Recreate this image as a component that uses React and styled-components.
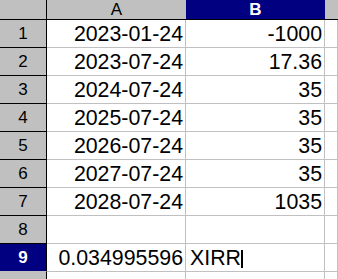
import React from 'react'
import styled, {createGlobalStyle} from 'styled-components'

const GlobalStyle = createGlobalStyle`
    html, body {
        margin: 0;
        padding: 0;
        background: #ffffff;
        overflow: hidden;
    }
`

const Sheet = styled.div`
    display: grid;
    grid-template-columns: 47px 139px 139px 1fr;
    grid-auto-rows: 28px;
    grid-template-rows: 20px;
    width: 338px;
    height: 279px;
    overflow: hidden;
    font-family: "Liberation Sans", Arial, sans-serif;
`

const ColHead = styled.div`
    display: flex;
    align-items: center;
    justify-content: center;
    box-sizing: border-box;
    background: ${({active}) => (active ? '#000080' : '#c0c0c0')};
    color: ${({active}) => (active ? '#ffffff' : '#000000')};
    font-weight: ${({active}) => (active ? 700 : 400)};
    font-size: 17px;
    border-bottom: 1px solid #000000;
    border-right: ${({corner}) => (corner ? '1px solid #000000' : 'none')};
    padding-top: 1px;
`

const RowHead = styled.div`
    display: flex;
    align-items: center;
    justify-content: center;
    box-sizing: border-box;
    background: ${({active}) => (active ? '#000080' : '#c0c0c0')};
    color: ${({active}) => (active ? '#ffffff' : '#000000')};
    font-weight: ${({active}) => (active ? 700 : 400)};
    font-size: 17px;
    border-right: 1px solid #000000;
    border-bottom: 1px solid ${({active}) => (active ? '#c0c0c0' : '#000000')};
`

const Cell = styled.div`
    display: flex;
    align-items: flex-end;
    justify-content: ${({left}) => (left ? 'flex-start' : 'flex-end')};
    box-sizing: border-box;
    border-right: 1px solid #c0c0c0;
    border-bottom: 1px solid #c0c0c0;
    padding: 0 2px 1px 4px;
    font-size: 21.33px;
    line-height: 24px;
    color: #000000;
    white-space: nowrap;
`

const Caret = styled.span`
    display: inline-block;
    width: 2px;
    height: 18px;
    margin-left: 0;
    margin-bottom: 2px;
    background: #000000;
`

const rows = [
    ['2023-01-24', '-1000'],
    ['2023-07-24', '17.36'],
    ['2024-07-24', '35'],
    ['2025-07-24', '35'],
    ['2026-07-24', '35'],
    ['2027-07-24', '35'],
    ['2028-07-24', '1035'],
    ['', ''],
]

export default function App() {
    return (
        <>
            <GlobalStyle />
            <Sheet>
                <ColHead corner />
                <ColHead>A</ColHead>
                <ColHead active>B</ColHead>
                <ColHead />
                {rows.map((row, index) => (
                    <React.Fragment key={index}>
                        <RowHead>{index + 1}</RowHead>
                        <Cell>{row[0]}</Cell>
                        <Cell>{row[1]}</Cell>
                        <Cell />
                    </React.Fragment>
                ))}
                <RowHead active>9</RowHead>
                <Cell>0.034995596</Cell>
                <Cell left>XIRR<Caret /></Cell>
                <Cell />
                {/* row 10 is only a sliver at the bottom edge */}
                <RowHead />
                <Cell />
                <Cell />
                <Cell />
            </Sheet>
        </>
    )
}
